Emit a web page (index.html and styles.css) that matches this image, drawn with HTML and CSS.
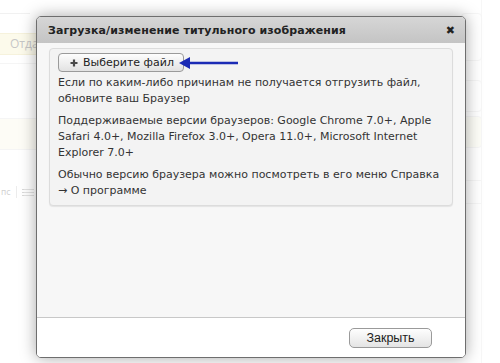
FILE: index.html
```html
<!DOCTYPE html>
<html lang="ru">
<head>
    <meta charset="UTF-8">
    <meta name="viewport" content="width=device-width, initial-scale=1.0">
    <title>Загрузка изображения</title>
    <link rel="stylesheet" href="styles.css">
</head>
<body>

    <!-- page behind the dialog -->
    <div class="page">
        <div class="page-main">
            <div class="bg-topbox"></div>
            <div class="bg-tab"><span>Отдать</span></div>
            <div class="bg-line"></div>
            <div class="bg-band"></div>
            <div class="bg-toolbar">
                <span class="bg-tool">пс</span>
                <span class="bg-sep"></span>
                <span class="bg-list">
                    <i></i><i></i><i></i>
                </span>
            </div>
        </div>
        <div class="page-side">
            <div class="side-box side-box-tall"></div>
            <div class="side-box side-box-link"><span>nl</span></div>
            <div class="side-box side-box-yellow"></div>
            <div class="side-box side-box-low"></div>
        </div>
    </div>

    <div class="dialog">
        <div class="dialog-header">
            <span class="dialog-title">Загрузка/изменение титульного изображения</span>
            <span class="dialog-close">&#10006;</span>
        </div>
        <div class="dialog-body">
            <div class="info-box">
                <div class="file-row">
                    <button type="button" class="file-btn">
                        <svg class="plus" width="8" height="8" viewBox="0 0 8 8">
                            <path d="M4 0.5 V7.5 M0.5 4 H7.5" stroke="#4a4a4a" stroke-width="2.2"/>
                        </svg>
                        Выберите файл
                    </button>
                    <svg class="arrow" width="60" height="12" viewBox="0 0 60 12">
                        <path d="M8 6 H59" stroke="#1b2bb5" stroke-width="2.4"/>
                        <path d="M0 6 L11 0 L11 12 Z" fill="#1b2bb5"/>
                    </svg>
                </div>
                <p>Если по каким-либо причинам не получается отгрузить файл, обновите ваш Браузер</p>
                <p>Поддерживаемые версии браузеров: Google Chrome 7.0+, Apple Safari 4.0+, Mozilla Firefox 3.0+, Opera 11.0+, Microsoft Internet Explorer 7.0+</p>
                <p>Обычно версию браузера можно посмотреть в его меню Справка &rarr; О программе</p>
            </div>
        </div>
        <div class="dialog-footer">
            <button type="button" class="close-btn">Закрыть</button>
        </div>
    </div>

</body>
</html>
```

FILE: styles.css
```css
body {
    margin: 0;
    padding: 0;
    background: #fff;
    font-family: "DejaVu Sans", Verdana, sans-serif;
    color: #333;
    width: 500px;
    height: 363px;
    overflow: hidden;
    position: relative;
}

/* faded page behind */
.page {
    display: flex;
    justify-content: space-between;
    height: 363px;
    opacity: 0.55;
}
.page-main {
    width: 60px;
}
.bg-topbox {
    height: 13px;
    width: 30px;
    border-bottom: 1px solid #e6e6e6;
}
.bg-tab {
    margin-top: 19px;
    height: 20px;
    background: #fbf6dc;
    border-top: 1px solid #f0e8c0;
    border-bottom: 1px solid #f0e8c0;
    font-family: "Open Sans", sans-serif;
    font-size: 12px;
    color: #999;
    line-height: 20px;
    padding-left: 10px;
}
.bg-line {
    margin-top: 8px;
    border-top: 1px solid #eee;
}
.bg-band {
    margin-top: 54px;
    height: 30px;
    background: #fdfbef;
    border-top: 1px solid #eee;
    border-bottom: 1px solid #eee;
}
.bg-toolbar {
    margin-top: 36px;
    display: flex;
    align-items: center;
    gap: 5px;
    font-size: 8px;
    color: #aaa;
    padding-left: 1px;
}
.bg-sep {
    width: 1px;
    height: 12px;
    background: #ddd;
}
.bg-list {
    display: flex;
    flex-direction: column;
    gap: 2px;
}
.bg-list i {
    display: block;
    width: 10px;
    height: 1px;
    border-left: 2px solid #bbb;
    background: #ccc;
}
.page-side {
    width: 30px;
    padding-top: 13px;
    border-right: 1px solid #f1f1f1;
    margin-right: 18px;
}
.side-box {
    border: 1px solid #f0f0f0;
    border-radius: 4px;
    margin-left: 10px;
    margin-right: -1px;
}
.side-box-tall {
    height: 46px;
}
.side-box-link {
    margin-top: 19px;
    height: 30px;
    font-size: 11px;
    color: #bbb;
    text-decoration: underline;
    line-height: 28px;
}
.side-box-link span {
    margin-left: -8px;
}
.side-box-yellow {
    margin-top: 4px;
    height: 30px;
    background: #fdfcf2;
}
.side-box-low {
    margin-top: 32px;
    height: 22px;
    border-radius: 0;
}

/* dialog */
.dialog {
    position: absolute;
    left: 36px;
    top: 16px;
    width: 428px;
    height: 340px;
    border: 1px solid #6e6e6e;
    border-radius: 5px;
    background: #fff;
    box-shadow: 0 0 16px rgba(0, 0, 0, 0.35);
    display: flex;
    flex-direction: column;
    overflow: hidden;
}
.dialog-header {
    height: 26px;
    background: linear-gradient(to bottom, #d6d6d6, #c4c4c4);
    display: flex;
    align-items: center;
    justify-content: space-between;
    padding: 0 10px 0 11px;
    flex-shrink: 0;
}
.dialog-title {
    font-weight: bold;
    font-size: 11px;
    color: #222;
    letter-spacing: 0.1px;
}
.dialog-close {
    font-size: 11px;
    color: #222;
}
.dialog-body {
    flex: 1;
    background: #f7f7f7;
    padding: 5px 12px;
    border-bottom: 1px solid #c8c8c8;
}
.info-box {
    background: #f3f3f3;
    border: 1px solid #dcdcdc;
    border-radius: 4px;
    box-shadow: 0 1px 1px rgba(0, 0, 0, 0.08);
    padding: 4px 8px 6px 8px;
}
.file-row {
    display: flex;
    align-items: center;
}
.file-btn {
    height: 19px;
    width: 126px;
    padding: 0 0 0 11px;
    border: 1px solid #9a9a9a;
    border-radius: 4px;
    background: linear-gradient(to bottom, #fdfdfd, #e2e2e2);
    font-family: "DejaVu Sans", Verdana, sans-serif;
    font-size: 11px;
    color: #222;
    text-align: left;
    display: flex;
    align-items: center;
    gap: 5px;
}
.plus {
    flex-shrink: 0;
}
.arrow {
    margin-left: -5px;
}
.info-box p {
    margin: 0 0 6px 0;
    font-size: 11px;
    line-height: 16px;
    color: #333;
}
.info-box p:last-child {
    margin-bottom: 0;
}
.file-row + p {
    margin-top: 3px;
}
.dialog-footer {
    height: 39px;
    flex-shrink: 0;
    background: #fff;
    display: flex;
    align-items: center;
    justify-content: flex-end;
    padding-right: 33px;
}
.close-btn {
    width: 83px;
    height: 20px;
    border: 1px solid #9a9a9a;
    border-radius: 5px;
    background: linear-gradient(to bottom, #fefefe, #e4e4e4);
    font-family: "Liberation Sans", Arial, sans-serif;
    font-size: 12.5px;
    color: #222;
    padding: 0;
}
```
